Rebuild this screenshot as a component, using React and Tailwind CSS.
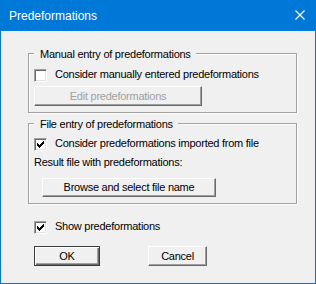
const font = { fontFamily: '"Liberation Sans", Arial, sans-serif' };

const CheckMark = () => (
  <svg width="13" height="13" viewBox="0 0 13 13" className="absolute -left-px -top-px" shapeRendering="crispEdges">
    <rect x="3" y="5" width="1" height="3" fill="#000" />
    <rect x="4" y="6" width="1" height="3" fill="#000" />
    <rect x="5" y="7" width="1" height="3" fill="#000" />
    <rect x="6" y="6" width="1" height="3" fill="#000" />
    <rect x="7" y="5" width="1" height="3" fill="#000" />
    <rect x="8" y="4" width="1" height="3" fill="#000" />
    <rect x="9" y="3" width="1" height="3" fill="#000" />
  </svg>
);

const Checkbox = ({ checked, label }) => (
  <div className="flex items-start h-[13px] gap-[8px]">
    <div className="relative w-[13px] h-[13px] shrink-0 bg-white border border-t-[#a0a0a0] border-l-[#a0a0a0] border-b-white border-r-white shadow-[inset_1px_1px_0_#696969,inset_-1px_-1px_0_#e3e3e3]">
      {checked && <CheckMark />}
    </div>
    <span className="leading-[13px] -mt-px whitespace-nowrap">{label}</span>
  </div>
);

const Button = ({ children, className = "", disabled, isDefault }) => (
  <div
    className={`flex items-center justify-center bg-[#f0f0f0] border whitespace-nowrap leading-[13px] ${
      isDefault
        ? "border-[#3c3c3c] shadow-[inset_1px_1px_0_#fff,inset_-1px_-1px_0_#696969,inset_-2px_-2px_0_#a0a0a0]"
        : "border-t-white border-l-white border-b-[#696969] border-r-[#696969] shadow-[inset_-1px_-1px_0_#a0a0a0]"
    } ${disabled ? "text-[#a0a0a0]" : "text-black"} ${className}`}
  >
    {children}
  </div>
);

const Group = ({ title, className = "", children }) => (
  <div className={`relative flex flex-col items-start w-[269px] border border-[#a0a0a0] shadow-[inset_1px_1px_0_#fff,1px_1px_0_#fff] ${className}`}>
    <span className="absolute left-[5px] top-[-6px] pl-[6px] pr-[5px] bg-[#f0f0f0] leading-[13px] whitespace-nowrap">{title}</span>
    {children}
  </div>
);

export default function App() {
  return (
    <div className="w-[316px] h-[284px] flex flex-col border border-[#0078d7] bg-[#f0f0f0] text-[11px] tracking-[-0.25px] text-black" style={font}>
      {/* title bar */}
      <div className="h-[30px] shrink-0 bg-[#0078d7] flex justify-between pl-[8px] pr-[10px]">
        <span className="self-center text-white text-[12px] tracking-normal leading-[16px]">Predeformations</span>
        <svg width="10" height="10" viewBox="0 0 10 10" className="mt-[9px]">
          <path d="M0.5 0.5 L9.5 9.5 M9.5 0.5 L0.5 9.5" stroke="#fff" strokeWidth="1.1" />
        </svg>
      </div>

      <div className="flex flex-col pl-[27px] pt-[22px]">
        <Group title="Manual entry of predeformations" className="pl-[5px] pt-[15px] pb-[6px]">
          <Checkbox label="Consider manually entered predeformations" />
          <Button disabled className="mt-[4px] w-[168px] h-[20px]">Edit predeformations</Button>
        </Group>

        <Group title="File entry of predeformations" className="mt-[10px] pl-[5px] pt-[14px] pb-[6px]">
          <Checkbox checked label="Consider predeformations imported from file" />
          <span className="block mt-[5px] leading-[13px]">Result file with predeformations:</span>
          <Button className="mt-[9px] ml-[8px] w-[174px] h-[19px]">Browse and select file name</Button>
        </Group>

        <div className="mt-[17px] pl-[6px]">
          <Checkbox checked label="Show predeformations" />
        </div>

        <div className="mt-[12px] pl-[6px] flex gap-[48px]">
          <Button isDefault className="w-[66px] h-[20px]">OK</Button>
          <Button className="w-[59px] h-[20px]">Cancel</Button>
        </div>
      </div>
    </div>
  );
}
